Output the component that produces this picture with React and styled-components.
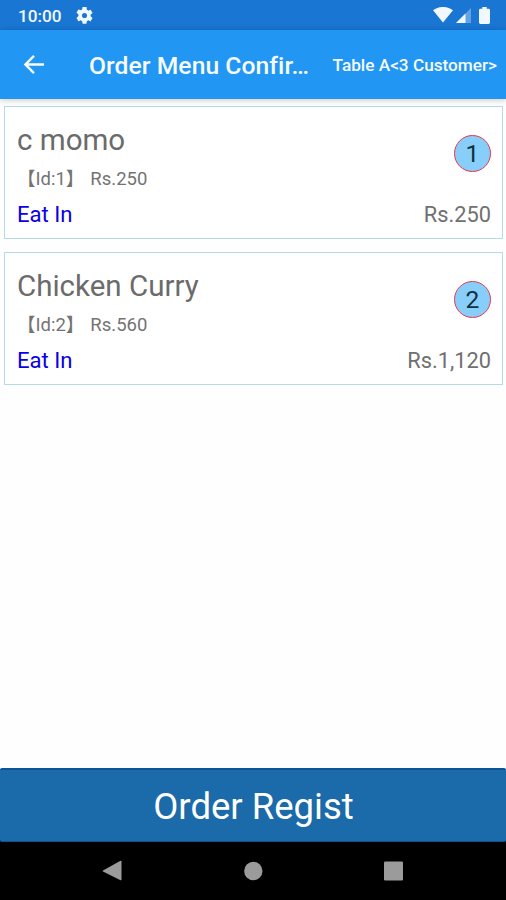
import React from "react";
import styled, { createGlobalStyle } from "styled-components";

const GlobalStyle = createGlobalStyle`
  * {
    box-sizing: border-box;
  }

  body {
    margin: 0;
    background: #fff;
    font-family: Roboto, "Noto Sans CJK JP", sans-serif;
  }
`;

// Styled Components
const Screen = styled.div`
  width: 100%;
  height: 100vh;
  display: flex;
  flex-direction: column;
  background: #fefefe;
  overflow: hidden;
`;

const StatusBar = styled.div`
  height: 30px;
  flex: none;
  padding: 0 16px 0 18px;
  display: flex;
  align-items: center;
  justify-content: space-between;
  color: #f2f8ff;
  background: #1976d2;
`;

const StatusGroup = styled.div`
  display: flex;
  align-items: center;
  gap: ${({ $gap }) => $gap}px;
`;

const Time = styled.span`
  font-size: 17.2px;
  font-weight: 500;
  line-height: 22px;
  padding-top: 2px;
`;

const AppBar = styled.header`
  height: 69px;
  flex: none;
  padding: 0 9px 0 23px;
  display: flex;
  align-items: center;
  color: #f7fbff;
  background: #2196f3;
  box-shadow: 0 1px 6px rgba(0, 0, 0, 0.22);
  z-index: 1;
`;

const BackButton = styled.button`
  display: flex;
  width: 66px;
  padding: 0;
  border: none;
  background: none;
  color: inherit;
  cursor: pointer;
`;

const PageTitle = styled.h1`
  margin: 2px 0 0;
  font-size: 24.7px;
  font-weight: 500;
  line-height: 30px;
  letter-spacing: 0.04px;
  white-space: nowrap;
`;

const TableLabel = styled.div`
  margin-left: auto;
  font-size: 17.2px;
  font-weight: 500;
  white-space: nowrap;
`;

const OrderList = styled.main`
  flex: 1;
  padding: 7px 3px 0 4px;
  display: flex;
  flex-direction: column;
  gap: 13px;
`;

const OrderCard = styled.div`
  height: 133px;
  padding: 15px 11px 0 12px;
  display: flex;
  justify-content: space-between;
  border: 1px solid #b4dce6;
  background: #fff;
`;

const Column = styled.div`
  display: flex;
  flex-direction: column;
  align-items: ${({ $end }) => ($end ? "flex-end" : "flex-start")};
`;

const ItemName = styled.div`
  font-size: 29.5px;
  line-height: 36px;
  color: #6b6b6b;
`;

const ItemDetail = styled.div`
  height: 23px;
  margin-top: 10px;
  display: flex;
  gap: 6px;
  font-size: 18.5px;
  line-height: 23px;
  color: #737373;
`;

const OrderType = styled.div`
  margin-top: 10px;
  font-size: 22.1px;
  line-height: 27px;
  color: #0b00e6;
`;

const Quantity = styled.div`
  width: 37px;
  height: 37px;
  margin-top: 13px;
  display: flex;
  align-items: center;
  justify-content: center;
  border: 1.5px solid #e8394b;
  border-radius: 50%;
  font-size: 24.6px;
  line-height: 28px;
  color: #14303f;
  background: #87cefa;
`;

const Total = styled.div`
  margin-top: 29px;
  font-size: 21.8px;
  line-height: 27px;
  color: #707070;
`;

const RegistButton = styled.button`
  height: 74px;
  flex: none;
  padding: 2px 0 0 1px;
  border: solid #0b5497;
  border-width: 2px 0 1px;
  border-radius: 2px;
  font-family: inherit;
  font-size: 36.5px;
  color: #fff;
  background: #1b6aaa;
  cursor: pointer;
`;

const Footer = styled.footer`
  display: flex;
  flex-direction: column;
  background: linear-gradient(#fefefe 40%, #000 50%);
`;

const NavBar = styled.nav`
  height: 58px;
  padding: 0 102px;
  display: flex;
  align-items: center;
  justify-content: space-between;
  color: #9b9b9b;
  background: #000;
`;

const orders = [
  { id: 1, name: "c momo", price: "250", quantity: 1, total: "250" },
  { id: 2, name: "Chicken Curry", price: "560", quantity: 2, total: "1,120" },
];

const GearIcon = () => (
  <svg width="17" height="17" viewBox="2 2 20 20" fill="currentColor">
    <path d="M19.14 12.94c.04-.3.06-.61.06-.94s-.02-.64-.07-.94l2.03-1.58a.49.49 0 0 0 .12-.61l-1.92-3.32a.49.49 0 0 0-.59-.22l-2.39.96a7 7 0 0 0-1.62-.94l-.36-2.54A.48.48 0 0 0 13.92 2h-3.84a.48.48 0 0 0-.48.41l-.36 2.54c-.59.24-1.13.57-1.62.94l-2.39-.96a.48.48 0 0 0-.59.22L2.72 8.47a.48.48 0 0 0 .12.61l2.03 1.58a7.5 7.5 0 0 0 0 1.88L2.84 14.52a.49.49 0 0 0-.12.61l1.92 3.32c.12.22.37.29.59.22l2.39-.96c.5.38 1.03.7 1.62.94l.36 2.54c.05.24.24.41.48.41h3.84c.24 0 .44-.17.47-.41l.36-2.54a7 7 0 0 0 1.62-.94l2.39.96c.22.08.47 0 .59-.22l1.92-3.32a.48.48 0 0 0-.12-.61zM12 15a3 3 0 1 1 0-6 3 3 0 0 1 0 6z" />
  </svg>
);

const WifiIcon = () => (
  <svg width="20" height="16" viewBox="0 0 20 16" fill="currentColor">
    <path d="M0 3.2C5.7-1.1 14.3-1.1 20 3.2L10 15.6z" />
  </svg>
);

const SignalIcon = () => (
  <svg width="15" height="16" viewBox="0 0 15 16" fill="currentColor">
    <path d="M0 16L15 1v15z" opacity="0.35" />
    <path d="M0 16L9.5 6.5V16z" />
  </svg>
);

const BatteryIcon = () => (
  <svg width="11" height="17" viewBox="0 0 11 17" fill="currentColor">
    <path d="M3.3 0h4.4v1.7h1.8c.8 0 1.5.6 1.5 1.4v12.5c0 .8-.7 1.4-1.5 1.4h-8C.7 17 0 16.4 0 15.6V3.1c0-.8.7-1.4 1.5-1.4h1.8z" />
  </svg>
);

const BackIcon = () => (
  <svg width="22" height="20" viewBox="0 0 22 20" fill="none" stroke="currentColor" strokeWidth="2.4">
    <path d="M21 9.5H3M11 .9L2.4 9.5l8.6 8.6" />
  </svg>
);

const OrderRow = ({ order }) => (
  <OrderCard>
    <Column>
      <ItemName>{order.name}</ItemName>
      <ItemDetail>
        <span>{`【Id:${order.id}】`}</span>
        <span>Rs.{order.price}</span>
      </ItemDetail>
      <OrderType>Eat In</OrderType>
    </Column>
    <Column $end>
      <Quantity>{order.quantity}</Quantity>
      <Total>Rs.{order.total}</Total>
    </Column>
  </OrderCard>
);

// Main Component
const App = () => {
  return (
    <>
      <GlobalStyle />
      <Screen>
        <StatusBar>
          <StatusGroup $gap={14}>
            <Time>10:00</Time>
            <GearIcon />
          </StatusGroup>
          <StatusGroup $gap={3}>
            <WifiIcon />
            <StatusGroup $gap={8}>
              <SignalIcon />
              <BatteryIcon />
            </StatusGroup>
          </StatusGroup>
        </StatusBar>
        <AppBar>
          <BackButton aria-label="Back">
            <BackIcon />
          </BackButton>
          <PageTitle>Order Menu Confir…</PageTitle>
          <TableLabel>Table A&lt;3 Customer&gt;</TableLabel>
        </AppBar>
        <OrderList>
          {orders.map((order) => (
            <OrderRow key={order.id} order={order} />
          ))}
        </OrderList>
        <Footer>
          <RegistButton>Order Regist</RegistButton>
          <NavBar>
            <svg width="20" height="22" viewBox="0 0 20 22" fill="currentColor">
              <path d="M1 10.5L18.5.8q1-.4 1 .6v18.2q0 1-1 .6L1 11.5q-.7-.5 0-1z" />
            </svg>
            <svg width="20" height="20" viewBox="0 0 20 20" fill="currentColor">
              <circle cx="10.3" cy="10" r="9.2" />
            </svg>
            <svg width="20" height="20" viewBox="0 0 20 20" fill="currentColor">
              <rect x="0" y="0.5" width="19" height="19" rx="1.2" />
            </svg>
          </NavBar>
        </Footer>
      </Screen>
    </>
  );
};

export default App;
